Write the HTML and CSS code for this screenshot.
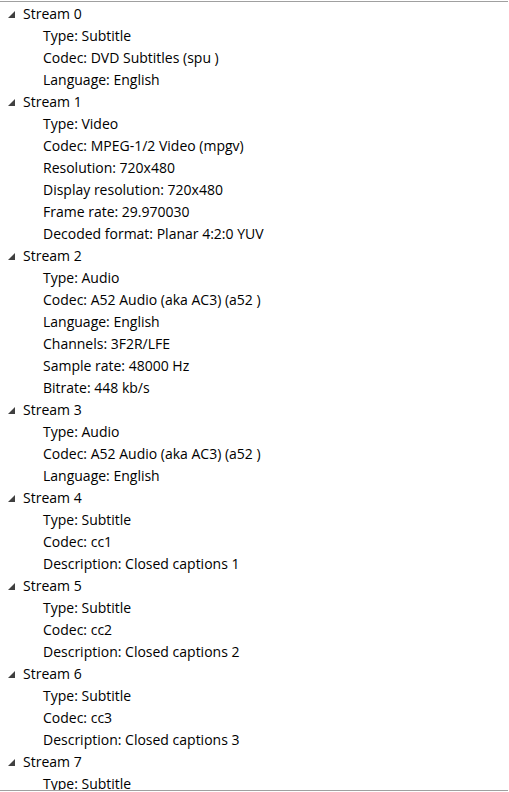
FILE: index.html
```html
<!DOCTYPE html>
<html>
<head>
<meta charset="utf-8">
<link rel="stylesheet" href="styles.css">
</head>
<body>
<div class="tree">
  <div class="node">
    <div class="row parent"><span class="arrow"></span><span class="label">Stream 0</span></div>
    <div class="row child">Type: Subtitle</div>
    <div class="row child">Codec: DVD Subtitles (spu )</div>
    <div class="row child">Language: English</div>
  </div>
  <div class="node">
    <div class="row parent"><span class="arrow"></span><span class="label">Stream 1</span></div>
    <div class="row child">Type: Video</div>
    <div class="row child">Codec: MPEG-1/2 Video (mpgv)</div>
    <div class="row child">Resolution: 720x480</div>
    <div class="row child">Display resolution: 720x480</div>
    <div class="row child">Frame rate: 29.970030</div>
    <div class="row child">Decoded format: Planar 4:2:0 YUV</div>
  </div>
  <div class="node">
    <div class="row parent"><span class="arrow"></span><span class="label">Stream 2</span></div>
    <div class="row child">Type: Audio</div>
    <div class="row child">Codec: A52 Audio (aka AC3) (a52 )</div>
    <div class="row child">Language: English</div>
    <div class="row child">Channels: 3F2R/LFE</div>
    <div class="row child">Sample rate: 48000 Hz</div>
    <div class="row child">Bitrate: 448 kb/s</div>
  </div>
  <div class="node">
    <div class="row parent"><span class="arrow"></span><span class="label">Stream 3</span></div>
    <div class="row child">Type: Audio</div>
    <div class="row child">Codec: A52 Audio (aka AC3) (a52 )</div>
    <div class="row child">Language: English</div>
  </div>
  <div class="node">
    <div class="row parent"><span class="arrow"></span><span class="label">Stream 4</span></div>
    <div class="row child">Type: Subtitle</div>
    <div class="row child">Codec: cc1</div>
    <div class="row child">Description: Closed captions 1</div>
  </div>
  <div class="node">
    <div class="row parent"><span class="arrow"></span><span class="label">Stream 5</span></div>
    <div class="row child">Type: Subtitle</div>
    <div class="row child">Codec: cc2</div>
    <div class="row child">Description: Closed captions 2</div>
  </div>
  <div class="node">
    <div class="row parent"><span class="arrow"></span><span class="label">Stream 6</span></div>
    <div class="row child">Type: Subtitle</div>
    <div class="row child">Codec: cc3</div>
    <div class="row child">Description: Closed captions 3</div>
  </div>
  <div class="node">
    <div class="row parent"><span class="arrow"></span><span class="label">Stream 7</span></div>
    <div class="row child">Type: Subtitle</div>
  </div>
</div>
</body>
</html>
```
FILE: styles.css
```css
html, body {
  margin: 0;
  padding: 0;
  background: #ffffff;
}
body {
  width: 509px;
  height: 792px;
  overflow: hidden;
}
.tree {
  margin-top: 1px;
  width: 508px;
  height: 787px;
  padding-top: 1px;
  border-top: 1px solid #a0a0a0;
  border-bottom: 1px solid #a0a0a0;
  overflow: hidden;
  font-family: "Open Sans", sans-serif;
  font-size: 14px;
  color: #000000;
  box-sizing: content-box;
}
.row {
  height: 22px;
  line-height: 22px;
  white-space: nowrap;
}
.parent {
  display: flex;
  align-items: center;
  padding-left: 8px;
}
.arrow {
  width: 0;
  height: 0;
  border-left: 7px solid transparent;
  border-bottom: 7px solid #404040;
  margin-right: 8px;
  margin-top: 1px;
}
.child {
  padding-left: 43px;
}
```
